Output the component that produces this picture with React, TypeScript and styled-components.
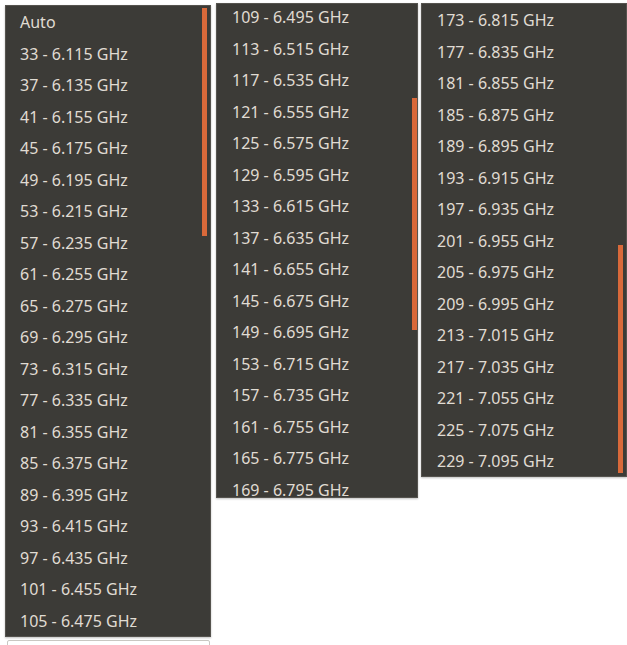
import styled, { createGlobalStyle } from "styled-components";

const GlobalStyle = createGlobalStyle`
  html, body {
    margin: 0;
    padding: 0;
    background: #ffffff;
  }
  body {
    width: 627px;
    height: 645px;
    overflow: hidden;
    font-family: "Noto Sans", "Open Sans", sans-serif;
  }
`;

const Page = styled.div`
  display: flex;
  align-items: flex-start;
  width: 627px;
  height: 645px;
`;

const Column = styled.div<{ $left: number; $top: number }>`
  display: flex;
  flex-direction: column;
  margin-left: ${({ $left }) => $left}px;
  padding-top: ${({ $top }) => $top}px;
`;

const Menu = styled.div<{ $width: number; $height: number }>`
  position: relative;
  box-sizing: border-box;
  width: ${({ $width }) => $width}px;
  height: ${({ $height }) => $height}px;
  background: #3c3b37;
  border: 1px solid #55534e;
  box-shadow: 0 1px 2px rgba(0, 0, 0, 0.25);
  overflow: hidden;
`;

const List = styled.ul<{ $offset: number; $indent: number }>`
  list-style: none;
  margin: ${({ $offset }) => $offset}px 0 0 0;
  padding: 0 0 0 ${({ $indent }) => $indent}px;
`;

const Item = styled.li`
  height: 31.5px;
  line-height: 33px;
  font-size: 16px;
  color: #e0dcd3;
  white-space: nowrap;
`;

const Scrollbar = styled.div<{ $top: number; $height: number; $right: number }>`
  position: absolute;
  right: ${({ $right }) => $right}px;
  top: ${({ $top }) => $top}px;
  width: 5px;
  height: ${({ $height }) => $height}px;
  background: #d9693a;
`;

const Field = styled.div`
  box-sizing: border-box;
  margin: 3px 0 0 2px;
  width: 203px;
  height: 10px;
  background: #ffffff;
  border: 1px solid #c9c7c2;
  border-radius: 2px;
`;

const freq = (ch: number) => `${ch} - ${(5.95 + ch * 0.005).toFixed(3)} GHz`;
const range = (from: number, to: number) => {
  const out: string[] = [];
  for (let c = from; c <= to; c += 4) out.push(freq(c));
  return out;
};

const first = ["Auto", ...range(33, 105)];
const second = range(109, 169);
const third = range(173, 229);

export default function App() {
  return (
    <Page>
      <GlobalStyle />
      <Column $left={5} $top={5}>
        <Menu $width={206} $height={632}>
          <List $offset={0} $indent={14}>
            {first.map((t) => (
              <Item key={t}>{t}</Item>
            ))}
          </List>
          <Scrollbar $top={2} $height={228} $right={3} />
        </Menu>
        <Field />
      </Column>
      <Column $left={5} $top={3}>
        <Menu $width={202} $height={495}>
          <List $offset={-3} $indent={15}>
            {second.map((t) => (
              <Item key={t}>{t}</Item>
            ))}
          </List>
          <Scrollbar $top={94} $height={232} $right={0} />
        </Menu>
      </Column>
      <Column $left={3} $top={3}>
        <Menu $width={206} $height={474}>
          <List $offset={0} $indent={15}>
            {third.map((t) => (
              <Item key={t}>{t}</Item>
            ))}
          </List>
          <Scrollbar $top={241} $height={228} $right={3} />
        </Menu>
      </Column>
    </Page>
  );
}
